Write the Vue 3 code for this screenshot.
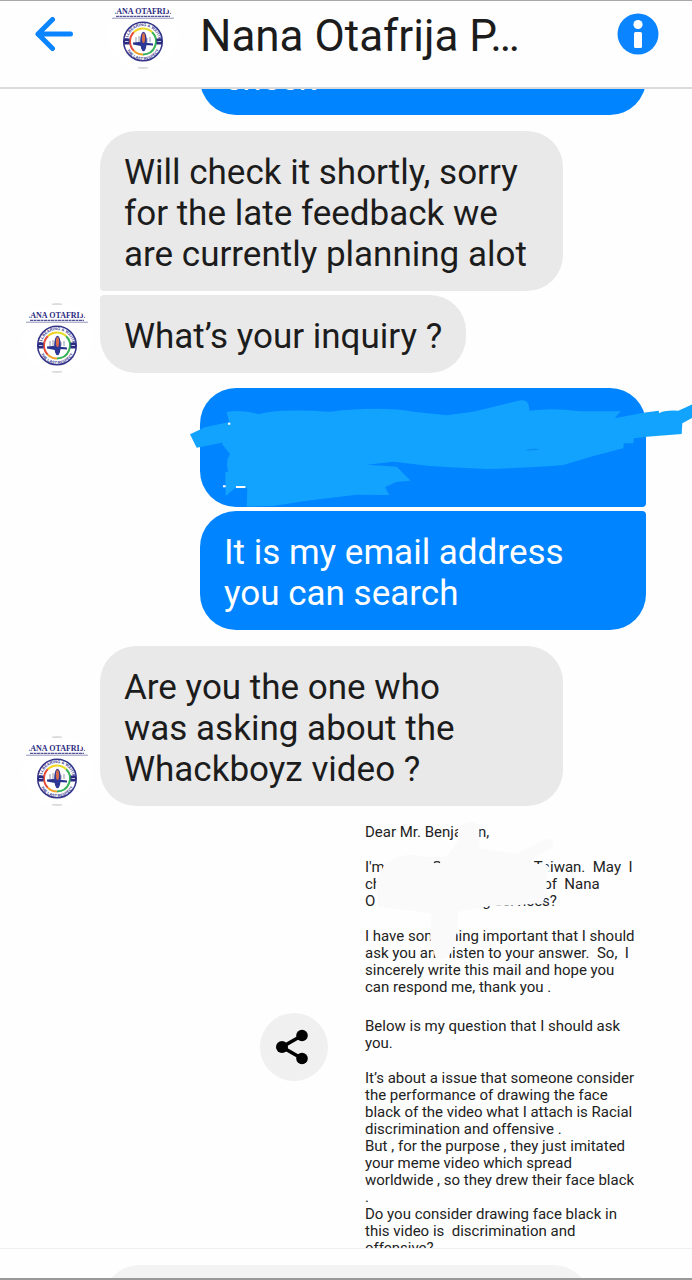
<template>
  <div class="chat-page">
    <!-- Header -->
    <header class="chat-header">
      <button type="button" class="icon-button back-button" aria-label="Back">
        <svg width="40" height="34" viewBox="0 0 40 34">
          <path d="M36.500 17H4M18.500 2.500L4 17L18.500 31.500" fill="none" stroke="#0a84ff" stroke-width="5" stroke-linecap="round" stroke-linejoin="round" />
        </svg>
      </button>
      <svg class="avatar" viewBox="0 0 70 70">
        <use href="#page-logo" />
      </svg>
      <h1 class="chat-title">Nana Otafrija P…</h1>
      <button type="button" class="icon-button" aria-label="Info">
        <svg width="42" height="42" viewBox="0 0 42 42">
          <circle cx="21" cy="21" r="20.500" fill="#0a84ff" />
          <circle cx="21" cy="11.500" r="4.600" fill="#fff" />
          <rect x="17" y="19" width="8" height="16" rx="1.500" fill="#fff" />
        </svg>
      </button>
    </header>

    <!-- Messages -->
    <main class="thread">
      <section
        v-for="(group, index) in groups"
        :key="index"
        class="group"
        :class="group.from"
      >
        <svg v-if="group.from === 'incoming'" class="avatar" viewBox="0 0 70 70">
          <use href="#page-logo" />
        </svg>
        <div class="bubbles">
          <div
            v-for="(message, i) in group.messages"
            :key="i"
            class="bubble"
            :class="{ wide: message.wide }"
          >
            <p v-if="message.text" class="bubble-text">{{ message.text }}</p>
            <svg v-else class="marker" viewBox="24 24 1512 357">
              <path
                fill="#12a3ff"
                d="M30 163L75 142L148 126L140 96Q190 88 235 103Q290 85 450 95Q600 78 700 95L800 106L880 95L1015 62Q1050 55 1048 92Q1120 82 1200 94L1322 94L1304 115L1390 98L1436 92L1438 100Q1450 90 1495 92L1540 72V112L1507 130L1505 162L1400 170L1362 175L1360 190H1332L1330 205L1240 228L1150 255Q1070 262 920 267Q820 262 750 258L640 245L560 254L650 260L692 302L648 306L615 322L628 345L530 344L380 362L280 378L200 380L202 325H165L137 348L136 276L145 275Q135 245 150 222L128 195L126 188L50 203Z"
              />
              <path d="M1035 211Q1060 204 1082 208Q1060 213 1035 211Z" fill="#0a8cf0" />
              <path d="M144 131H151M129 319H137M168 321H196" stroke="#fff" stroke-width="6" />
            </svg>
          </div>
        </div>
      </section>

      <section class="shared">
        <button type="button" class="share-button" aria-label="Share">
          <svg width="32" height="36" viewBox="0 0 32 36">
            <path d="M26 6.500L6 18L26 29.500" fill="none" stroke="#000" stroke-width="3.600" />
            <circle cx="6" cy="18" r="6" />
            <circle cx="26" cy="6.500" r="5.800" />
            <circle cx="26" cy="29.500" r="5.800" />
          </svg>
        </button>
        <article class="note">
          <p>Dear Mr. Benja<span class="gap gap-name"></span>n,</p>
          <p>
            I'm<span class="gap gap-intro"></span>Taiwan.&nbsp; May&nbsp; I<br />
            ch<span class="gap gap-middle"></span>of&nbsp; Nana<br />
            O<span class="gap gap-company"></span>g services?
          </p>
          <p>
            I have something important that I should<br />
            ask you and listen to your answer.&nbsp; So,&nbsp; I<br />
            sincerely write this mail and hope you<br />
            can respond me, thank you .
          </p>
          <p class="question">
            Below is my question that I should ask<br />
            you.
          </p>
          <p>
            It’s about a issue that someone consider<br />
            the performance of drawing the face<br />
            black of the video what I attach is Racial<br />
            discrimination and offensive .<br />
            But , for the purpose , they just imitated<br />
            your meme video which spread<br />
            worldwide , so they drew their face black<br />
            .<br />
            Do you consider drawing face black in<br />
            this video is&nbsp; discrimination and<br />
            offensive?
          </p>
          <svg class="eraser" width="300" height="200" viewBox="0 0 900 600">
            <path
              fill="#fafafa"
              d="M290 140L322 95L325 50Q360 25 388 45V115L500 132L585 87Q615 85 608 112L545 146V162H586L602 175L590 195V250L578 278L500 286L420 288L325 305L320 370L305 425Q285 460 255 440L240 385L245 310L85 290L78 215L105 160Q170 122 215 140Z"
            />
            <path d="M252 158Q261 152 270 158" fill="none" stroke="#222" stroke-width="4" />
          </svg>
        </article>
      </section>
    </main>

    <!-- Composer -->
    <footer class="composer">
      <input v-model="draft" type="text" class="composer-input" aria-label="Message" />
    </footer>

    <!-- Logo shared by every avatar -->
    <svg class="defs" aria-hidden="true">
      <defs>
        <path id="ring-top" d="M19.500 42.500a15.500 15.500 0 0 1 31 0" />
        <path id="ring-bottom" d="M16.500 42.500a18.500 18.500 0 0 0 37 0" />
        <g id="page-logo">
          <rect width="70" height="70" fill="#fff" />
          <path d="M30 1H40M30 69H40" stroke="#b8b8b8" stroke-width="1" />
          <text x="35" y="15" class="logo-name">NANA OTAFRIJA</text>
          <path d="M8 17.300H62" stroke="#55559a" stroke-width="1.300" stroke-dasharray="3 .5" />
          <path d="M4 19.200H66" stroke="#7777a8" stroke-width=".8" />
          <circle cx="35" cy="42.500" r="19.300" fill="#fff" stroke="#35358a" stroke-width="1.500" />
          <text class="logo-ring"><textPath href="#ring-top" startOffset="50%">PALLBEARING &amp; WAITING</textPath></text>
          <text class="logo-ring"><textPath href="#ring-bottom" startOffset="50%">THE LAST RESPECT</textPath></text>
          <g fill="none" stroke-width="2">
            <path d="M35 29.500A13 13 0 0 0 25.800 33.300" stroke="#f2d21f" />
            <path d="M25.800 33.300A13 13 0 0 0 25.800 51.700" stroke="#e84b35" />
            <path d="M25.800 51.700A13 13 0 0 0 35 55.500" stroke="#f0a02a" />
            <path d="M35 29.500A13 13 0 0 1 44.200 33.300" stroke="#e5dc2c" />
            <path d="M44.200 33.300A13 13 0 0 1 35 55.500" stroke="#35b158" />
          </g>
          <path d="M16 39.500h5.500v6h-5.500zM48.500 39.500h5.500v6h-5.500z" fill="#2b2b80" />
          <path d="M17 42.500h3.500M49.500 42.500h3.500" stroke="#c5c5e8" stroke-width="1" />
          <path d="M28 38v5M31 37v6M39 39v4M42 38v5" stroke="#b9bac8" stroke-width="1.500" />
          <path d="M25 43.500L31 43L45 44.500V46.500L37 46L33 47L25 45.500Z" fill="#28348c" />
          <ellipse cx="35.500" cy="42.500" rx="3.300" ry="9.800" fill="#2c3796" />
          <ellipse cx="35.500" cy="39" rx="1.600" ry="5" fill="#d66a4a" />
        </g>
      </defs>
    </svg>
  </div>
</template>

<script setup>
import { ref } from 'vue'

const draft = ref('')

// Conversation, oldest first. A message without text is covered by the marker.
const groups = ref([
  {
    from: 'outgoing',
    messages: [{ text: 'check', wide: true }]
  },
  {
    from: 'incoming',
    messages: [
      { text: 'Will check it shortly, sorry\nfor the late feedback we\nare currently planning alot', wide: true },
      { text: 'What’s your inquiry ?' }
    ]
  },
  {
    from: 'outgoing',
    messages: [
      { text: '', wide: true },
      { text: 'It is my email address\nyou can search', wide: true }
    ]
  },
  {
    from: 'incoming',
    messages: [
      { text: 'Are you the one who\nwas asking about the\nWhackboyz video ?', wide: true }
    ]
  }
])
</script>

<style>
body {
  background: #fefefe;
}
</style>

<style scoped>
.chat-page {
  display: flex;
  flex-direction: column;
  height: 100vh;
  box-sizing: border-box;
  border-top: 1px solid #aaa6aa;
  border-bottom: 2px solid #999;
  overflow: hidden;
  background: #fefefe;
  color: #1c1c1c;
  font-family: Roboto, "Liberation Sans", sans-serif;
}

/* Header */
.chat-header {
  display: flex;
  align-items: center;
  flex-shrink: 0;
  height: 66px;
  padding: 0 33px 20px 34px;
  border-bottom: 2px solid #dadada;
}

.icon-button {
  display: flex;
  flex-shrink: 0;
  padding: 0;
  border: none;
  background: none;
  cursor: pointer;
}

.back-button {
  margin-right: 34px;
}

.avatar {
  display: block;
  flex-shrink: 0;
  width: 70px;
  height: 70px;
  border-radius: 50%;
}

.chat-title {
  flex: 1;
  min-width: 0;
  margin: 0;
  padding: 4px 0 0 22px;
  font-size: 44px;
  font-weight: 400;
  line-height: 52px;
  white-space: nowrap;
}

/* Thread */
.thread {
  flex: 1;
  min-height: 0;
  overflow: hidden;
}

.group {
  display: flex;
  align-items: flex-end;
  margin-top: 16px;
}

.incoming {
  padding-left: 22px;
  gap: 8px;
}

.outgoing {
  justify-content: flex-end;
  margin-top: 15px;
  padding-right: 46px;
}

/* Scrolled up under the header */
.group:first-child {
  margin-top: -52px;
}

.bubbles {
  display: flex;
  flex-direction: column;
  align-items: flex-start;
  gap: 4px;
}

.bubble {
  position: relative;
  box-sizing: border-box;
  min-height: 78px;
  padding: 21px 24px 16px;
  border-radius: 36px;
  background: #e9e9e9;
}

.incoming .wide {
  width: 463px;
}

.outgoing .wide {
  width: 446px;
}

.outgoing .bubble {
  background: #0084ff;
  color: #fff;
}

.incoming .bubble:not(:last-child) {
  border-bottom-left-radius: 4px;
}

.incoming .bubble:not(:first-child) {
  border-top-left-radius: 4px;
}

.outgoing .bubble:not(:last-child) {
  min-height: 119px;
  border-bottom-right-radius: 4px;
}

.outgoing .bubble:not(:first-child) {
  border-top-right-radius: 4px;
}

.bubble-text {
  margin: 0;
  font-size: 35px;
  line-height: 41px;
  white-space: pre-line;
}

.marker {
  position: absolute;
  top: 0;
  left: -12px;
  width: 504px;
  height: 119px;
}

/* Shared note */
.shared {
  display: flex;
  align-items: center;
  justify-content: flex-end;
  gap: 22px;
  margin-top: 4px;
  padding-right: 46px;
}

.share-button {
  display: flex;
  align-items: center;
  justify-content: center;
  flex-shrink: 0;
  width: 68px;
  height: 68px;
  padding: 0 4px 0 0;
  border: none;
  border-radius: 50%;
  background: #f0f0f0;
  cursor: pointer;
}

.note {
  position: relative;
  box-sizing: border-box;
  width: 296px;
  padding: 14px 0 26px 15px;
  font-size: 15px;
  line-height: 17px;
  color: #222;
  white-space: nowrap;
}

.note p {
  margin: 0 0 18px;
}

.note p.question {
  margin-top: 22px;
}

.note p:last-of-type {
  margin-bottom: 0;
}

.gap {
  display: inline-block;
}

.gap-name {
  width: 16px;
}

.gap-intro {
  width: 149px;
}

.gap-middle {
  width: 162px;
}

.gap-company {
  width: 107px;
}

.eraser {
  position: absolute;
  top: 0;
  left: 0;
}

/* Composer */
.composer {
  flex-shrink: 0;
  box-sizing: border-box;
  height: 30px;
  padding: 16px 103px 0 104px;
  border-top: 1px solid #efefef;
  overflow: hidden;
}

.composer-input {
  display: block;
  box-sizing: border-box;
  width: 100%;
  height: 70px;
  padding: 0 30px;
  border: none;
  border-radius: 35px;
  background: #f3f3f3;
  font-family: inherit;
  font-size: 35px;
}

/* Logo */
.defs {
  position: absolute;
  width: 0;
  height: 0;
}

.logo-name {
  fill: #2b2b80;
  font-family: "Liberation Serif", serif;
  font-size: 8px;
  font-weight: 700;
  text-anchor: middle;
}

.logo-ring {
  fill: #3b3b90;
  font-family: "Liberation Sans", sans-serif;
  font-size: 4px;
  font-weight: 700;
  text-anchor: middle;
}
</style>
